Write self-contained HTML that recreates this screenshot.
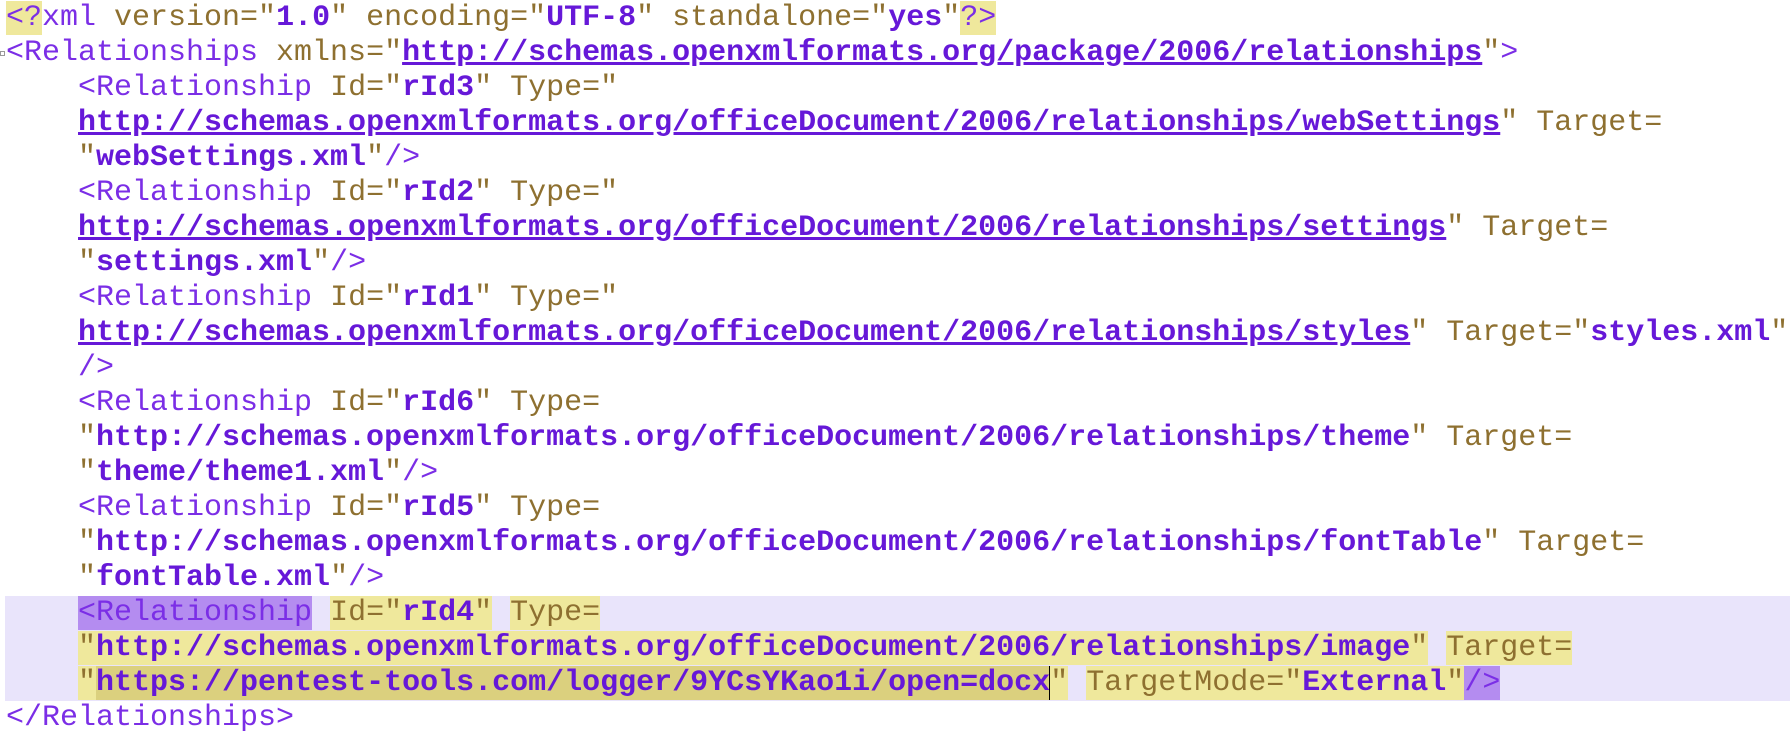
<!DOCTYPE html>
<html><head><meta charset="utf-8"><style>
body{margin:0;background:#fff;width:1790px;height:739px;overflow:hidden}
.c{position:absolute;left:0;top:1px;width:1790px}
.l{position:relative;height:35px;line-height:35px;font-family:"Liberation Mono",monospace;font-size:30px;white-space:pre;padding-left:6px;color:#8e7030}
.sel{background:#e9e4fb;margin-left:5px;padding-left:1px}
.t{color:#7b2ee6}
.v{color:#6618d8;font-weight:bold}
.u{text-decoration:underline}
.y{background:#efe89c}
.d{background:#dbd07e}
.p{background:#b48cf0}
.m{position:absolute;left:0;top:15px;width:5px;height:5px;border:1px solid #999;box-sizing:border-box}
</style></head><body><div class="c">
<div class="l"><span class="t y">&lt;?</span><span class="t">xml</span> version="<span class="v">1.0</span>" encoding="<span class="v">UTF-8</span>" standalone="<span class="v">yes</span>"<span class="t y">?&gt;</span></div>
<div class="l"><span class="m"></span><span class="t">&lt;Relationships</span> xmlns="<span class="v u">http://schemas.openxmlformats.org/package/2006/relationships</span>"<span class="t">&gt;</span></div>
<div class="l">    <span class="t">&lt;Relationship</span> Id="<span class="v">rId3</span>" Type="</div>
<div class="l">    <span class="v u">http://schemas.openxmlformats.org/officeDocument/2006/relationships/webSettings</span>" Target=</div>
<div class="l">    "<span class="v">webSettings.xml</span>"<span class="t">/&gt;</span></div>
<div class="l">    <span class="t">&lt;Relationship</span> Id="<span class="v">rId2</span>" Type="</div>
<div class="l">    <span class="v u">http://schemas.openxmlformats.org/officeDocument/2006/relationships/settings</span>" Target=</div>
<div class="l">    "<span class="v">settings.xml</span>"<span class="t">/&gt;</span></div>
<div class="l">    <span class="t">&lt;Relationship</span> Id="<span class="v">rId1</span>" Type="</div>
<div class="l">    <span class="v u">http://schemas.openxmlformats.org/officeDocument/2006/relationships/styles</span>" Target="<span class="v">styles.xml</span>"</div>
<div class="l">    <span class="t">/&gt;</span></div>
<div class="l">    <span class="t">&lt;Relationship</span> Id="<span class="v">rId6</span>" Type=</div>
<div class="l">    "<span class="v">http://schemas.openxmlformats.org/officeDocument/2006/relationships/theme</span>" Target=</div>
<div class="l">    "<span class="v">theme/theme1.xml</span>"<span class="t">/&gt;</span></div>
<div class="l">    <span class="t">&lt;Relationship</span> Id="<span class="v">rId5</span>" Type=</div>
<div class="l">    "<span class="v">http://schemas.openxmlformats.org/officeDocument/2006/relationships/fontTable</span>" Target=</div>
<div class="l">    "<span class="v">fontTable.xml</span>"<span class="t">/&gt;</span></div>
<div class="l sel">    <span class="t p">&lt;Relationship</span> <span class="y">Id="<span class="v">rId4</span>"</span> <span class="y">Type=</span></div>
<div class="l sel">    <span class="y">"<span class="v">http://schemas.openxmlformats.org/officeDocument/2006/relationships/image</span>"</span> <span class="y">Target=</span></div>
<div class="l sel">    <span class="y">"</span><span class="v d">https://pentest-tools.com/logger/9YCsYKao1i/open=docx</span><span class="y" style="border-left:1px solid #000;margin-left:-1px">"</span> <span class="y">TargetMode="<span class="v">External</span>"</span><span class="t p">/&gt;</span></div>
<div class="l"><span class="t">&lt;/Relationships&gt;</span></div>
</div></body></html>
